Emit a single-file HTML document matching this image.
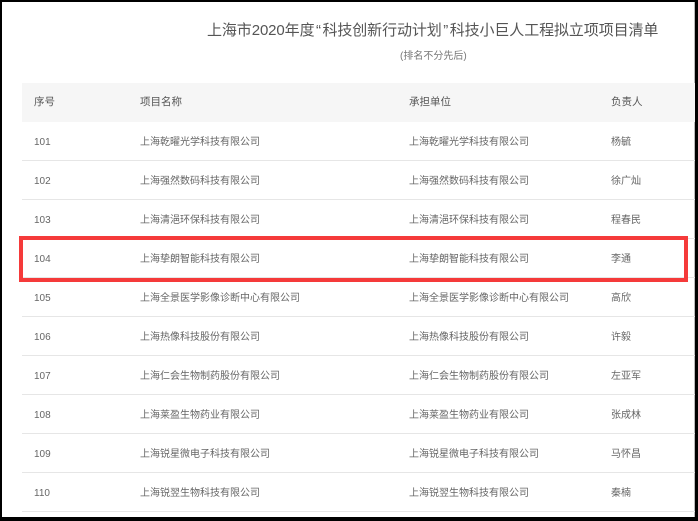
<!DOCTYPE html>
<html><head><meta charset="utf-8"><style>
*{margin:0;padding:0;box-sizing:border-box}
body{width:698px;height:521px;background:#000;position:relative;overflow:hidden;font-family:"Liberation Sans","Noto Sans CJK SC",sans-serif}
#pg{position:absolute;left:2px;top:2px;width:693px;height:515px;background:#fff;border-right:1px solid #bbb}
.t{position:absolute;left:205px;top:17px;font-size:15px;color:#555;white-space:nowrap;letter-spacing:-0.1px}
.t i{font-style:normal;display:inline-block;width:8px;text-align:center}
.s{position:absolute;left:398px;top:45px;font-size:10px;color:#777}
.hd{position:absolute;left:20px;top:81px;width:673px;height:39px;background:#f6f6f6}
.r{position:absolute;left:20px;width:673px;height:39px;border-bottom:1px solid #e6e6e6;font-size:10px;color:#666}
.r span{position:absolute;top:1px;line-height:39px;white-space:nowrap}
.hd span{position:absolute;line-height:39px;font-size:10.5px;color:#555}
.c1{left:12px}.c2{left:118px}.c3{left:387px}.c4{left:589px}
.box{position:absolute;left:17px;top:234px;width:669px;height:46px;border:4px solid #f53a3a}
</style></head><body><div id="pg">
<div class="t">上海市2020年度<i>“</i>科技创新行动计划<i>”</i>科技小巨人工程拟立项项目清单</div>
<div class="s">(排名不分先后)</div>
<div class="hd"><span class="c1">序号</span><span class="c2">项目名称</span><span class="c3">承担单位</span><span class="c4">负责人</span></div>
<div class="r" style="top:120px"><span class="c1">101</span><span class="c2">上海乾曜光学科技有限公司</span><span class="c3">上海乾曜光学科技有限公司</span><span class="c4">杨毓</span></div>
<div class="r" style="top:159px"><span class="c1">102</span><span class="c2">上海强然数码科技有限公司</span><span class="c3">上海强然数码科技有限公司</span><span class="c4">徐广灿</span></div>
<div class="r" style="top:198px"><span class="c1">103</span><span class="c2">上海清浥环保科技有限公司</span><span class="c3">上海清浥环保科技有限公司</span><span class="c4">程春民</span></div>
<div class="r" style="top:237px"><span class="c1">104</span><span class="c2">上海挚朗智能科技有限公司</span><span class="c3">上海挚朗智能科技有限公司</span><span class="c4">李通</span></div>
<div class="r" style="top:276px"><span class="c1">105</span><span class="c2">上海全景医学影像诊断中心有限公司</span><span class="c3">上海全景医学影像诊断中心有限公司</span><span class="c4">高欣</span></div>
<div class="r" style="top:315px"><span class="c1">106</span><span class="c2">上海热像科技股份有限公司</span><span class="c3">上海热像科技股份有限公司</span><span class="c4">许毅</span></div>
<div class="r" style="top:354px"><span class="c1">107</span><span class="c2">上海仁会生物制药股份有限公司</span><span class="c3">上海仁会生物制药股份有限公司</span><span class="c4">左亚军</span></div>
<div class="r" style="top:393px"><span class="c1">108</span><span class="c2">上海莱盈生物药业有限公司</span><span class="c3">上海莱盈生物药业有限公司</span><span class="c4">张成林</span></div>
<div class="r" style="top:432px"><span class="c1">109</span><span class="c2">上海锐星微电子科技有限公司</span><span class="c3">上海锐星微电子科技有限公司</span><span class="c4">马怀昌</span></div>
<div class="r" style="top:471px"><span class="c1">110</span><span class="c2">上海锐翌生物科技有限公司</span><span class="c3">上海锐翌生物科技有限公司</span><span class="c4">秦楠</span></div>
<div class="box"></div>
</div></body></html>
